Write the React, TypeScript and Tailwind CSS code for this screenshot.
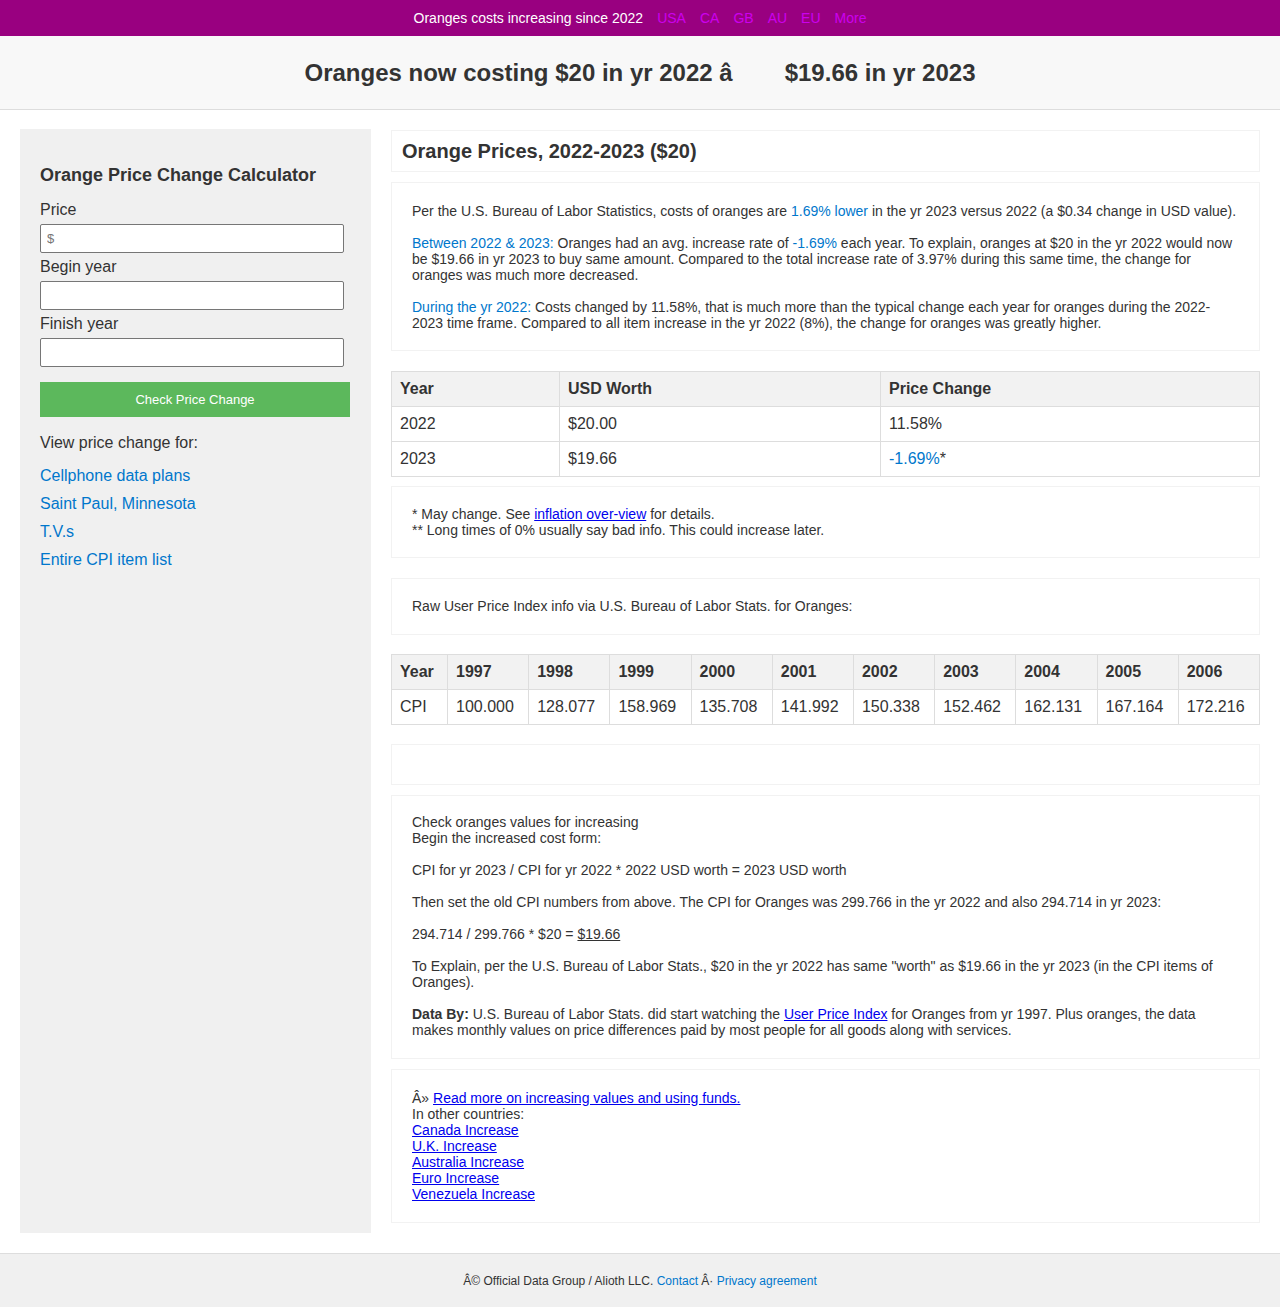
import React from "react"

const cpi = [
  ["1997", "100.000"],
  ["1998", "128.077"],
  ["1999", "158.969"],
  ["2000", "135.708"],
  ["2001", "141.992"],
  ["2002", "150.338"],
  ["2003", "152.462"],
  ["2004", "162.131"],
  ["2005", "167.164"],
  ["2006", "172.216"],
]

const sideLinks = ["Cellphone data plans", "Saint Paul, Minnesota", "T.V.s", "Entire CPI item list"]

const countryLinks = ["Canada Increase", "U.K. Increase", "Australia Increase", "Euro Increase", "Venezuela Increase"]

function Card({ children, className = "" }: { children?: React.ReactNode; className?: string }) {
  return <div className={`bg-white border border-[#f2f2f2] ${className}`}>{children}</div>
}

export default function App() {
  return (
    <div className="min-h-[1307px] bg-white text-[#333] font-[family-name:Liberation_Sans,Arial,sans-serif]">
      {/* top strip */}
      <div className="h-[36px] bg-[#990080] flex items-center justify-center gap-[14px] text-[14px] leading-[16px]">
        <span className="text-white">Oranges costs increasing since 2022</span>
        {["USA", "CA", "GB", "AU", "EU", "More"].map((l) => (
          <a key={l} href="#" className="text-[#cc00ee]">
            {l}
          </a>
        ))}
      </div>

      {/* headline */}
      <div className="h-[74px] bg-[#f8f8f8] border-b border-[#dddddd] flex items-center justify-center">
        <h1 className="text-[24px] font-bold leading-[28px] text-[#333]">
          Oranges now costing $20 in yr 2022 â<span className="inline-block w-[52px]"></span>$19.66 in yr 2023
        </h1>
      </div>

      <div className="flex items-stretch gap-[20px] px-[20px] pt-[19px] pb-[20px]">
        {/* sidebar */}
        <aside className="w-[351px] shrink-0 bg-[#f0f0f0] px-[20px] pt-[35px] pb-[20px]">
          <h3 className="text-[18px] font-bold leading-[22px]">Orange Price Change Calculator</h3>
          <div className="mt-[9px] flex flex-col">
            <label className="h-[29px] flex items-center text-[16px]">Price</label>
            <input
              className="w-[304px] h-[29px] bg-white border border-[#767676] rounded-[2px] px-[6px] text-[13px] placeholder:text-[#757575]"
              placeholder="$"
            />
            <label className="h-[28px] flex items-center text-[16px]">Begin year</label>
            <input className="w-[304px] h-[29px] bg-white border border-[#767676] rounded-[2px] px-[6px] text-[13px]" />
            <label className="h-[28px] flex items-center text-[16px]">Finish year</label>
            <input className="w-[304px] h-[29px] bg-white border border-[#767676] rounded-[2px] px-[6px] text-[13px]" />
            <button className="mt-[15px] w-[310px] h-[35px] bg-[#5cb85c] text-white text-[13px]">Check Price Change</button>
          </div>
          <p className="mt-[17px] text-[16px] leading-[18px]">View price change for:</p>
          <ul className="mt-[15px] flex flex-col gap-[10px]">
            {sideLinks.map((l) => (
              <li key={l} className="text-[16px] leading-[18px]">
                <a href="#" className="text-[#0077cc]">
                  {l}
                </a>
              </li>
            ))}
          </ul>
        </aside>

        {/* main column */}
        <main className="flex-1 pt-[1px] text-[14px] leading-[16px]">
          <Card className="px-[10px] py-[10px] mb-[10px]">
            <h2 className="text-[20px] font-bold leading-[20px]">Orange Prices, 2022-2023 ($20)</h2>
          </Card>

          <Card className="px-[20px] pt-[20px] pb-[19px] mb-[20px] flex flex-col gap-[16px]">
            <p>
              Per the U.S. Bureau of Labor Statistics, costs of oranges are{" "}
              <span className="text-[#0077cc]">1.69% lower</span> in the yr 2023 versus 2022 (a $0.34 change in USD value).
            </p>
            <p>
              <span className="text-[#0077cc]">Between 2022 &amp; 2023:</span> Oranges had an avg. increase rate of{" "}
              <span className="text-[#0077cc]">-1.69%</span> each year. To explain, oranges at $20 in the yr 2022 would now
              be $19.66 in yr 2023 to buy same amount. Compared to the total increase rate of 3.97% during this same time,
              the change for oranges was much more decreased.
            </p>
            <p>
              <span className="text-[#0077cc]">During the yr 2022:</span> Costs changed by 11.58%, that is much more than the
              typical change each year for oranges during the 2022-2023 time frame. Compared to all item increase in the yr
              2022 (8%), the change for oranges was greatly higher.
            </p>
          </Card>

          <table className="w-full border-collapse text-[16px] leading-[18px] mb-[9px]">
            <thead>
              <tr className="bg-[#f2f2f2] h-[35px]">
                <th className="w-[168px] border border-[#dddddd] px-[8px] py-0 text-left font-bold">Year</th>
                <th className="w-[321px] border border-[#dddddd] px-[8px] py-0 text-left font-bold">USD Worth</th>
                <th className="border border-[#dddddd] px-[8px] py-0 text-left font-bold">Price Change</th>
              </tr>
            </thead>
            <tbody>
              <tr className="h-[35px]">
                <td className="border border-[#dddddd] px-[8px] py-0">2022</td>
                <td className="border border-[#dddddd] px-[8px] py-0">$20.00</td>
                <td className="border border-[#dddddd] px-[8px] py-0">11.58%</td>
              </tr>
              <tr className="h-[35px]">
                <td className="border border-[#dddddd] px-[8px] py-0">2023</td>
                <td className="border border-[#dddddd] px-[8px] py-0">$19.66</td>
                <td className="border border-[#dddddd] px-[8px] py-0">
                  <span className="text-[#0077cc]">-1.69%</span>*
                </td>
              </tr>
            </tbody>
          </table>

          <Card className="px-[20px] py-[19px] mb-[20px]">
            <p>
              * May change. See{" "}
              <a href="#" className="text-[#0000ee] underline">
                inflation over-view
              </a>{" "}
              for details.
            </p>
            <p>** Long times of 0% usually say bad info. This could increase later.</p>
          </Card>

          <Card className="px-[20px] pt-[19px] pb-[20px] mb-[19px]">
            <p>Raw User Price Index info via U.S. Bureau of Labor Stats. for Oranges:</p>
          </Card>

          <table className="w-full border-collapse text-[16px] leading-[18px] mb-[19px]">
            <tbody>
              <tr className="bg-[#f2f2f2] h-[35px]">
                <th className="w-[56px] border border-[#dddddd] px-[8px] py-0 text-left font-bold">Year</th>
                {cpi.map(([y]) => (
                  <th key={y} className="border border-[#dddddd] px-[8px] py-0 text-left font-bold">
                    {y}
                  </th>
                ))}
              </tr>
              <tr className="h-[35px]">
                <td className="border border-[#dddddd] px-[8px] py-0">CPI</td>
                {cpi.map(([y, v]) => (
                  <td key={y} className="border border-[#dddddd] px-[8px] py-0">
                    {v}
                  </td>
                ))}
              </tr>
            </tbody>
          </table>

          <Card className="h-[41px] mb-[10px]" />

          <Card className="p-[20px] pt-[18px] mb-[10px] flex flex-col gap-[16px]">
            <p>
              Check oranges values for increasing
              <br />
              Begin the increased cost form:
            </p>
            <p>CPI for yr 2023 / CPI for yr 2022 * 2022 USD worth = 2023 USD worth</p>
            <p>
              Then set the old CPI numbers from above. The CPI for Oranges was 299.766 in the yr 2022 and also 294.714 in yr
              2023:
            </p>
            <p>
              294.714 / 299.766 * $20 = <span className="underline">$19.66</span>
            </p>
            <p>
              To Explain, per the U.S. Bureau of Labor Stats., $20 in the yr 2022 has same "worth" as $19.66 in the yr 2023 (in
              the CPI items of Oranges).
            </p>
            <p>
              <b>Data By:</b> U.S. Bureau of Labor Stats. did start watching the{" "}
              <a href="#" className="text-[#0000ee] underline">
                User Price Index
              </a>{" "}
              for Oranges from yr 1997. Plus oranges, the data makes monthly values on price differences paid by most people
              for all goods along with services.
            </p>
          </Card>

          <Card className="p-[20px] mb-[10px]">
            <p>
              Â»{" "}
              <a href="#" className="text-[#0000ee] underline">
                Read more on increasing values and using funds.
              </a>
            </p>
            <p>In other countries:</p>
            {countryLinks.map((l) => (
              <p key={l}>
                <a href="#" className="text-[#0000ee] underline">
                  {l}
                </a>
              </p>
            ))}
          </Card>
        </main>
      </div>

      <footer className="h-[55px] bg-[#f0f0f0] border-t border-[#dddddd] flex items-center justify-center text-[12px]">
        <span>
          Â© Official Data Group / Alioth LLC.{" "}
          <a href="#" className="text-[#0077cc]">
            Contact
          </a>{" "}
          Â·{" "}
          <a href="#" className="text-[#0077cc]">
            Privacy agreement
          </a>
        </span>
      </footer>
    </div>
  )
}
